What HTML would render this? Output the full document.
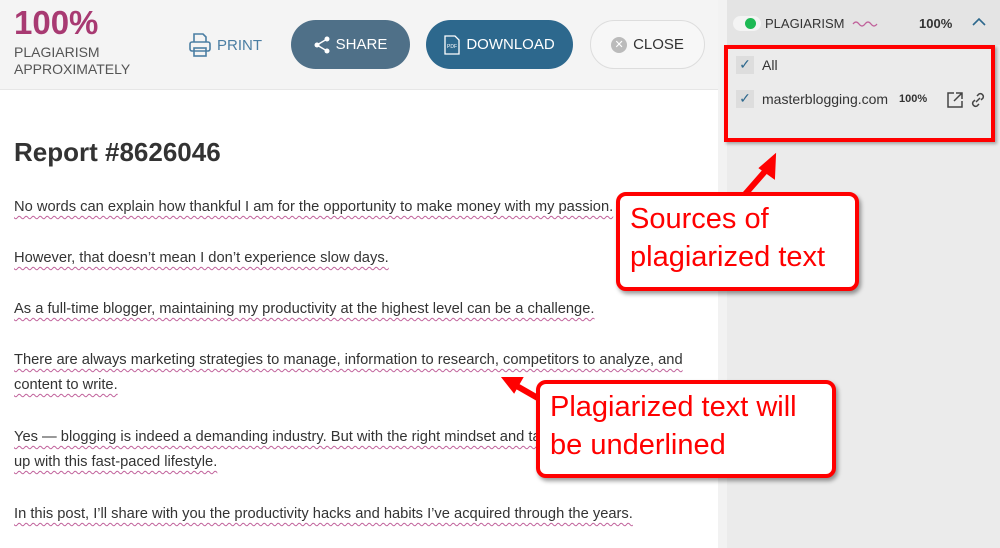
<!DOCTYPE html>
<html><head><style>
*{margin:0;padding:0;box-sizing:border-box}
body{width:1000px;height:548px;overflow:hidden;font-family:"Liberation Sans",sans-serif;background:#fff;position:relative}
.abs{position:absolute}
.hdr{left:0;top:0;width:720px;height:90px;background:#f4f4f4;border-bottom:1px solid #e6e6e6}
.pct{left:14px;top:4px;font-size:33px;font-weight:bold;color:#a83a72}
.sub{left:14px;top:44px;font-size:14px;color:#555;line-height:17px}
.btn{top:20px;height:49px;border-radius:25px;color:#fff;font-size:15px;display:flex;align-items:center;justify-content:center;gap:6px}
.p{color:#333;font-size:14.7px;left:14px;line-height:25px;white-space:nowrap}
.u{text-decoration:underline wavy #c0609a;text-decoration-thickness:1px;text-underline-offset:4px}
.side{left:727px;top:0;width:273px;height:548px;background:#ebebeb}
.call{background:#fff;border:4px solid #f00;border-radius:10px;color:#f00;font-size:29px;line-height:38px;padding:4px 10px;box-shadow:2px 3px 4px rgba(0,0,0,.4)}
</style></head><body>
<div class="abs hdr"></div>
<div class="abs pct">100%</div>
<div class="abs sub">PLAGIARISM<br>APPROXIMATELY</div>
<div class="abs" style="left:189px;top:32px;display:flex;align-items:center;gap:6px;color:#4b7ea3;font-size:15px">
<svg width="22" height="26" viewBox="0 0 22 26" fill="none" stroke="#4b7ea3" stroke-width="1.6"><path d="M5 10V2h9l3 3v5"/><rect x="1" y="10" width="20" height="9" rx="2"/><rect x="5" y="16" width="12" height="8"/></svg>PRINT</div>
<div class="abs btn" style="left:291px;width:119px;background:#4f7088"><svg width="16" height="18" viewBox="0 0 16 18" fill="#fff"><circle cx="13" cy="3" r="2.5"/><circle cx="3" cy="9" r="2.5"/><circle cx="13" cy="15" r="2.5"/><path d="M13 3L3 9l10 6" stroke="#fff" stroke-width="1.5" fill="none"/></svg>SHARE</div>
<div class="abs btn" style="left:426px;width:147px;background:#2d688d"><svg width="16" height="20" viewBox="0 0 16 20" fill="none" stroke="#fff" stroke-width="1.3"><path d="M1 1h10l4 4v14H1z"/><text x="3" y="13" font-size="5" fill="#fff" stroke="none">PDF</text></svg>DOWNLOAD</div>
<div class="abs btn" style="left:590px;width:115px;background:#f7f7f7;border:1px solid #ddd;color:#333"><span style="width:16px;height:16px;border-radius:50%;background:#bbb;color:#fff;font-size:11px;display:flex;align-items:center;justify-content:center">✕</span>CLOSE</div>
<div class="abs" style="left:14px;top:137px;font-size:26px;font-weight:bold;color:#333">Report #8626046</div>
<div class="abs p" style="top:195px"><span class="u">No words can explain how thankful I am for the opportunity to make money with my passion.</span></div>
<div class="abs p" style="top:246px"><span class="u">However, that doesn’t mean I don’t experience slow days.</span></div>
<div class="abs p" style="top:297px"><span class="u">As a full-time blogger, maintaining my productivity at the highest level can be a challenge.</span></div>
<div class="abs p" style="top:348px"><span class="u">There are always marketing strategies to manage, information to research, competitors to analyze, and</span><br><span class="u">content to write.</span></div>
<div class="abs p" style="top:425px"><span class="u">Yes — blogging is indeed a demanding industry. But with the right mindset and tactics, you can keep</span><br><span class="u">up with this fast-paced lifestyle.</span></div>
<div class="abs p" style="top:502px"><span class="u">In this post, I’ll share with you the productivity hacks and habits I’ve acquired through the years.</span></div>
<div class="abs" style="left:718px;top:0;width:9px;height:548px;background:#f2f2f2"></div>
<div class="abs side"></div>
<div class="abs" style="left:727px;top:0;width:273px;height:45px;background:#e4e4e4"></div>
<div class="abs" style="left:733px;top:16px;width:28px;height:15px;border-radius:8px;background:#f4f4f4"></div>
<div class="abs" style="left:745px;top:18px;width:11px;height:11px;border-radius:50%;background:#1db954"></div>
<div class="abs" style="left:765px;top:16px;font-size:13px;line-height:15px;color:#333">PLAGIARISM</div>
<svg class="abs" style="left:852px;top:20px" width="26" height="8" viewBox="0 0 26 8" fill="none" stroke="#c0609a" stroke-width="1.2"><path d="M1 4q3-4 6 0t6 0t6 0t6 0"/></svg>
<div class="abs" style="left:919px;top:16px;font-size:13px;line-height:15px;font-weight:bold;color:#333">100%</div>
<svg class="abs" style="left:972px;top:17px" width="14" height="9" viewBox="0 0 14 9" fill="none" stroke="#2d688d" stroke-width="1.6"><path d="M1 8l6-6 6 6"/></svg>
<div class="abs" style="left:724px;top:45px;width:271px;height:97px;border:4px solid #f00;box-shadow:2px 2px 3px rgba(0,0,0,.3)"></div>
<div class="abs" style="left:736px;top:56px;width:18px;height:18px;background:#ddd;color:#2d688d;font-size:14px;text-align:center">✓</div>
<div class="abs" style="left:762px;top:57px;font-size:14px;color:#333">All</div>
<div class="abs" style="left:736px;top:90px;width:18px;height:18px;background:#ddd;color:#2d688d;font-size:14px;text-align:center">✓</div>
<div class="abs" style="left:762px;top:91px;font-size:14px;color:#333">masterblogging.com</div>
<div class="abs" style="left:899px;top:93px;font-size:11px;font-weight:bold;color:#333">100%</div>
<svg class="abs" style="left:946px;top:91px" width="18" height="18" viewBox="0 0 18 18" fill="none" stroke="#444" stroke-width="1.5"><path d="M8 2H2v14h14v-6M10 2h6v6M16 2L8 10"/></svg>
<svg class="abs" style="left:969px;top:91px" width="18" height="18" viewBox="0 0 18 18" fill="none" stroke="#444" stroke-width="1.5"><path d="M7 11l4-4M8 5l2-2a3 3 0 014 4l-2 2M10 13l-2 2a3 3 0 01-4-4l2-2"/></svg>
<svg class="abs" style="left:0;top:0" width="1000" height="548"><g stroke="#f00" stroke-width="6" fill="#f00"><path d="M740 200L768 168"/><polygon points="775,155 760,168 774,178" stroke-width="2"/><path d="M550 405L515 385"/><polygon points="503,378 522,378 514,392" stroke-width="2"/></g></svg>
<div class="abs call" style="left:616px;top:192px;width:243px;height:99px">Sources of<br>plagiarized text</div>
<div class="abs call" style="left:536px;top:380px;width:300px;height:98px">Plagiarized text will<br>be underlined</div>
</body></html>
